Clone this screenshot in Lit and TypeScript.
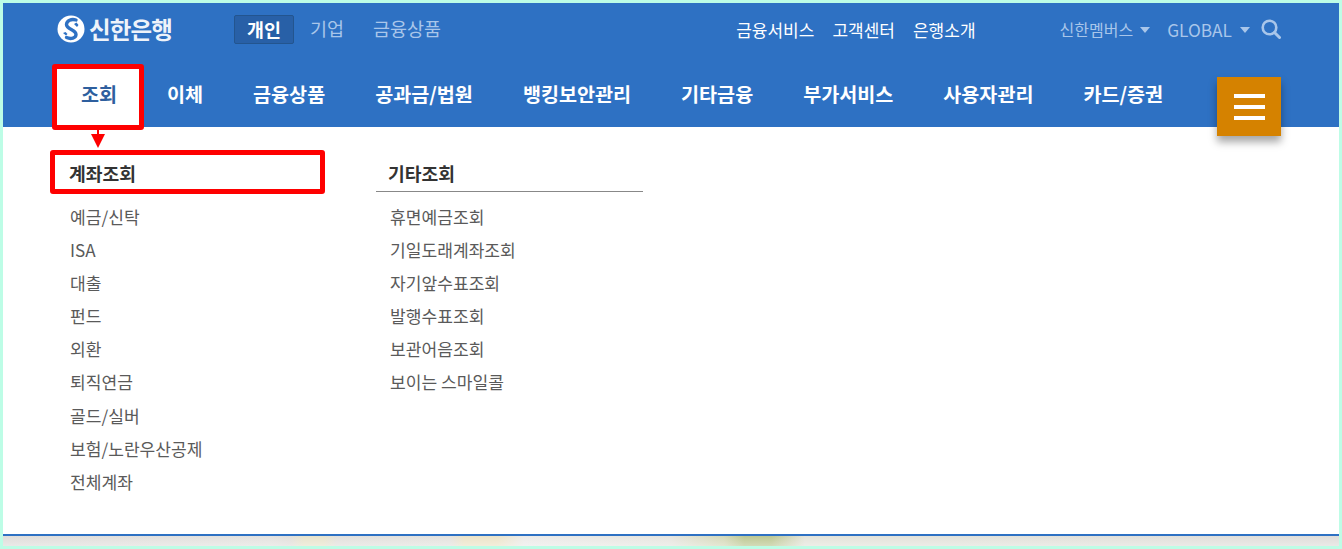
import { LitElement, html, css, svg } from "lit";
import { customElement } from "lit/decorators.js";

const NAV = ["이체", "금융상품", "공과금/법원", "뱅킹보안관리", "기타금융", "부가서비스", "사용자관리", "카드/증권"];
const COL1 = ["예금/신탁", "ISA", "대출", "펀드", "외환", "퇴직연금", "골드/실버", "보험/노란우산공제", "전체계좌"];
const COL2 = ["휴면예금조회", "기일도래계좌조회", "자기앞수표조회", "발행수표조회", "보관어음조회", "보이는 스마일콜"];

@customElement("app-root")
export class AppRoot extends LitElement {
  static styles = css`
    :host {
      display: block;
      width: 1342px;
      height: 549px;
      box-sizing: border-box;
      padding: 3px;
      background: #bdfde6;
      font-family: "Noto Sans CJK KR", "Noto Sans", sans-serif;
      overflow: hidden;
    }
    .page { position: relative; height: 543px; background: #fff; display: flex; flex-direction: column; }
    .head { background: #2e71c3; height: 124px; flex: none; }
    .top { display: flex; align-items: center; height: 52px; padding: 0 58px 0 54px; }
    .logo { display: flex; align-items: center; gap: 4px; width: 177px; flex: none; }
    .logo-text { color: #fff; font-size: 23.5px; font-weight: 700; letter-spacing: -0.9px; line-height: 30px; opacity: .92; }
    .tabs { display: flex; align-items: center; flex: 1; }
    .tab { font-size: 18.5px; color: #a9c6ea; margin-left: 16px; line-height: 29px; margin-right: 13px; position: relative; top: -1px; }
    .tab.on {
      margin: 0; width: 60px; height: 29px; box-sizing: border-box; text-align: center; line-height: 26px; top: 0;
      color: #fff; font-weight: 700; background: #2860a7; border: 1px solid #23558f; border-radius: 2px;
    }
    .links { display: flex; gap: 18px; margin-right: 84px; }
    .links span { color: #fff; font-size: 17px; }
    .util { display: flex; align-items: center; color: #a9c6ea; font-size: 16px; }
    .caret { width: 0; height: 0; border: 5.5px solid transparent; border-top: 6px solid #a9c6ea; border-bottom: 0; margin: 2px 0 0 7px; }
    .mem { margin-right: 17px; display: flex; align-items: center; }
    .mem.global { margin-right: 0; font-size: 17.3px; }
    .mem.global .caret { margin-left: 8px; }
    .search { margin-left: 11px; display: block; }
    .nav { display: flex; align-items: center; height: 72px; padding: 6px 0 0 78px; box-sizing: border-box; gap: 50px; position: relative; }
    .nav span { color: #fff; font-size: 19.6px; font-weight: 700; line-height: 66px; white-space: nowrap; }
    .nav .active { color: #2e5f9e; width: 35px; margin-right: 1px; position: relative; z-index: 1; }
    .active-bg {
      position: absolute; left: 49px; top: 61px; width: 92px; height: 66px; box-sizing: border-box;
      background: #fff; border: 5px solid #fe0000; border-radius: 3px;
    }
    .burger {
      position: absolute; left: 1214px; top: 74px; width: 64px; height: 59px; background: #d58200;
      box-shadow: 0 6px 8px rgba(0,0,0,.35); display: flex; flex-direction: column; justify-content: center; gap: 7px; align-items: center;
    }
    .burger i { display: block; width: 31px; height: 4px; background: #fff; }
    .menu { flex: 1; display: flex; padding: 23px 0 0 47px; }
    .col { display: flex; flex-direction: column; }
    .col.a { width: 326px; }
    .col.b { width: 267px; }
    .h {
      height: 42px; line-height: 46px; box-sizing: border-box; font-size: 18.2px; font-weight: 700; color: #333; margin-bottom: 8px;
    }
    .a .h { padding-left: 19px; width: 275px; position: relative; }
    .a .h::before {
      content: ""; position: absolute; left: 0; top: 0; width: 275px; height: 44px; box-sizing: border-box;
      border: 5px solid #fe0000; border-radius: 3px;
    }
    .b .h { padding-left: 12px; border-bottom: 1px solid #888; }
    .item { height: 33.1px; line-height: 33.1px; font-size: 17.1px; color: #5a5a5a; white-space: nowrap; padding-left: 20px; }
    .b .item { padding-left: 14px; }
    .arrow { position: absolute; left: 86px; top: 124px; display: block; }
    .line { height: 2px; background: #2e71c3; flex: none; }
    .foot {
      height: 10px; flex: none;
      background: linear-gradient(180deg, rgba(255,255,255,0) 0, rgba(255,255,255,.35) 100%),
        linear-gradient(90deg, #dfddda 0, #e4e2df 20%, #e2dfdb 21.5%, #e8e4cc 22.5%, #e8e4cc 24%, #e2e0dc 25%, #e4e2de 33.5%, #ece4c8 34.5%, #ece4c8 37%, #ecebe9 39%, #e6e5df 50%, #d5d9b8 54%, #bcc792 55.5%, #bcc792 57.5%, #e4e4da 60%, #dfddda 100%);
    }
  `;

  private logo() {
    return svg`<svg width="28" height="28" viewBox="0 0 28 28">
      <circle cx="14" cy="14" r="13.5" fill="#fff"/>
      <path d="M19 5C14.5 3.5 9.5 5.5 9.5 9.5c0 5 9.5 5 9.5 10 0 3.5-5 5-9.5 3" fill="none" stroke="#2e71c3" stroke-width="3.4" stroke-linecap="round"/>
      <path d="M17 9l2.5-1.5 2 2.5-1.5 2zM6 18l2.5-1 2 2-1.5 1.5z" fill="#2e71c3"/>
    </svg>`;
  }

  render() {
    return html`<div class="page">
      <div class="head">
        <div class="top">
          <div class="logo">${this.logo()}<span class="logo-text">신한은행</span></div>
          <div class="tabs">
            <span class="tab on">개인</span><span class="tab">기업</span><span class="tab">금융상품</span>
          </div>
          <div class="links"><span>금융서비스</span><span>고객센터</span><span>은행소개</span></div>
          <div class="util">
            <span class="mem">신한멤버스<i class="caret"></i></span>
            <span class="mem global">GLOBAL<i class="caret"></i></span>
            <svg class="search" width="20" height="20" viewBox="0 0 20 20" fill="none" stroke="#a9c6ea">
              <circle cx="8.5" cy="8.5" r="6.8" stroke-width="2.6"/>
              <path d="M13.5 13.5L18.5 18.5" stroke-width="3" stroke-linecap="round"/>
            </svg>
          </div>
        </div>
        <div class="active-bg"></div>
        <div class="nav">
          <span class="active">조회</span>
          ${NAV.map((n) => html`<span>${n}</span>`)}
        </div>
      </div>
      <svg class="arrow" width="18" height="22" viewBox="0 0 18 22">
        <path d="M9 0V10" stroke="#fe0000" stroke-width="2"/><path d="M2 7H16L9 21Z" fill="#fe0000"/>
      </svg>
      <div class="burger"><i></i><i></i><i></i></div>
      <div class="menu">
        <div class="col a"><div class="h">계좌조회</div>${COL1.map((c) => html`<div class="item">${c}</div>`)}</div>
        <div class="col b"><div class="h">기타조회</div>${COL2.map((c) => html`<div class="item">${c}</div>`)}</div>
      </div>
      <div class="line"></div>
      <div class="foot"></div>
    </div>`;
  }
}
